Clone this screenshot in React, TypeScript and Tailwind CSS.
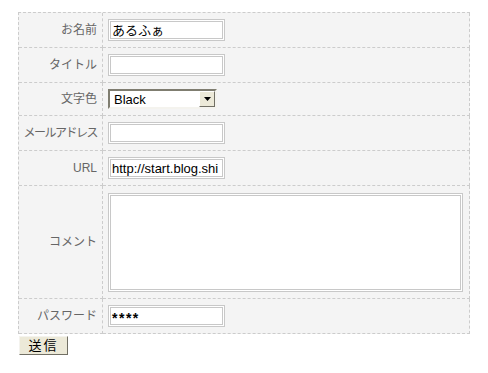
import React from "react"

const font = { fontFamily: '"Liberation Sans", "Noto Sans CJK JP", sans-serif' }

function Row({ label, h, children, tight }: { label: string; h: string; children: React.ReactNode; tight?: boolean }) {
  return (
    <>
      <div className={`${h} flex items-center justify-end pr-[5px] border-r border-b border-dashed border-[#cccccc] text-[12px] text-[#666666] whitespace-nowrap ${tight ? "tracking-[-1.5px]" : ""}`}>
        {label}
      </div>
      <div className={`${h} flex items-center pl-[5px] border-r border-b border-dashed border-[#cccccc]`}>
        {children}
      </div>
    </>
  )
}

function TextBox({ children }: { children?: React.ReactNode }) {
  return (
    <div className="w-[117px] h-[22px] border-[3px] border-double border-[#c8c8c8] bg-white overflow-hidden flex items-center pl-[1px] text-[13px] text-black whitespace-nowrap leading-none">
      {children}
    </div>
  )
}

export default function App() {
  return (
    <div className="bg-white min-h-[373px] pl-[18px] pt-[12px]" style={font}>
      <div className="w-[452px] grid grid-cols-[84px_367px] bg-[#f4f4f4] border-t border-l border-dashed border-[#cccccc]">
        <Row label="お名前" h="h-[35px]">
          <TextBox>あるふぁ</TextBox>
        </Row>
        <Row label="タイトル" h="h-[35px]">
          <TextBox />
        </Row>
        <Row label="文字色" h="h-[33px]">
          <div className="w-[109px] h-[20px] border-2 border-t-[#7f7d70] border-l-[#7f7d70] border-b-[#f4f3ee] border-r-[#f4f3ee] bg-white flex items-center justify-between">
            <span className="pl-[4px] text-[13px] text-black leading-none">Black</span>
            <div className="w-[16px] h-[16px] bg-[#ece9d8] border border-t-white border-l-white border-b-[#716f64] border-r-[#716f64] flex items-center justify-center">
              <svg width="7" height="4" viewBox="0 0 7 4">
                <path d="M0 0h7L3.5 4z" fill="#000" />
              </svg>
            </div>
          </div>
        </Row>
        <Row label="メールアドレス" h="h-[35px]" tight>
          <TextBox />
        </Row>
        <Row label="URL" h="h-[35px]">
          <TextBox>http://start.blog.shi</TextBox>
        </Row>
        <Row label="コメント" h="h-[113px]">
          <div className="w-[355px] h-[99px] border-[3px] border-double border-[#c8c8c8] bg-white" />
        </Row>
        <Row label="パスワード" h="h-[35px]">
          <TextBox>
            <span className="pt-[4px] text-[14px] font-bold tracking-[1.5px] leading-none">****</span>
          </TextBox>
        </Row>
      </div>
      <button className="mt-[2px] ml-[1px] w-[49px] h-[19px] bg-[#ece9d8] border border-t-[#f4f3ee] border-l-[#f4f3ee] border-b-[#716f64] border-r-[#716f64] text-[13px] text-black leading-none flex items-center justify-center tracking-[2px]">
        送信
      </button>
    </div>
  )
}
